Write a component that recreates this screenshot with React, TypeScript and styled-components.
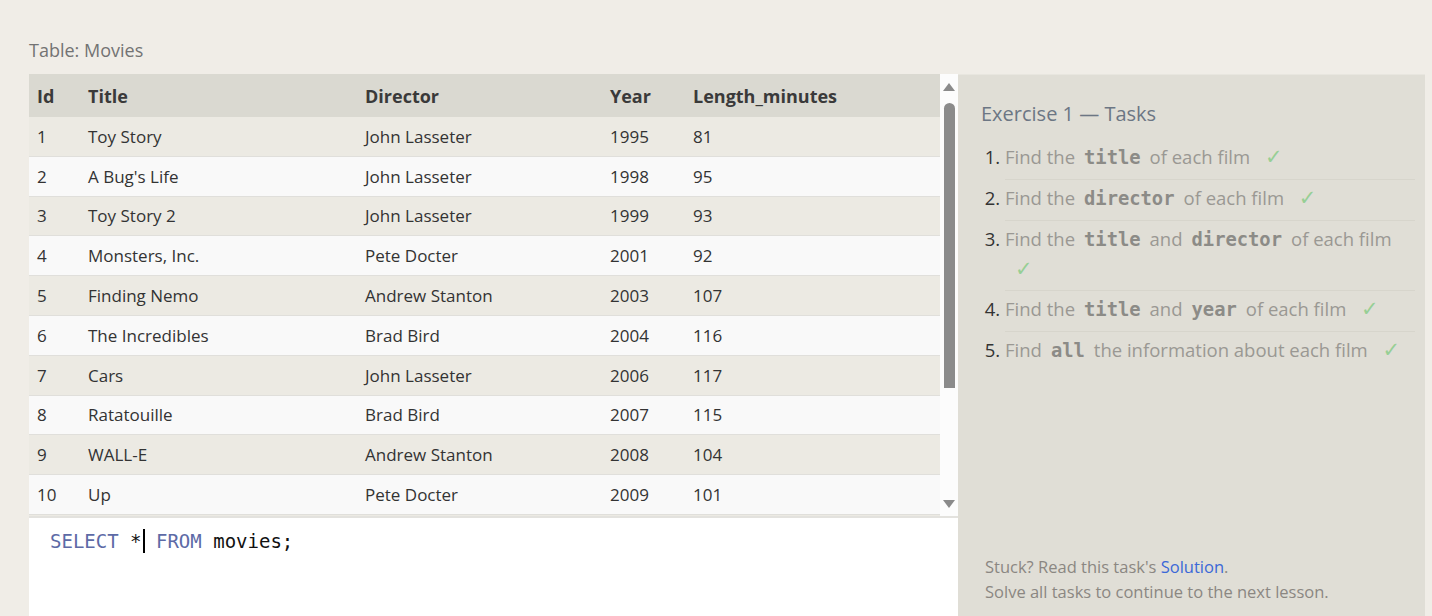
import React from "react";
import styled, { createGlobalStyle } from "styled-components";

const Global = createGlobalStyle`
  html, body { margin: 0; padding: 0; }
  body {
    background: #f0ede7;
    font-family: "Open Sans", "Noto Sans", sans-serif;
    color: #333;
  }
`;

const Page = styled.div`
  width: 1432px;
  height: 616px;
  overflow: hidden;
  padding: 36px 7px 0 29px;
  box-sizing: border-box;
`;

const Caption = styled.div`
  font-size: 18px;
  line-height: 28px;
  color: #737373;
  margin-bottom: 10px;
`;

const Main = styled.div`
  display: flex;
  height: 542px;
`;

const LeftCol = styled.div`
  width: 929px;
  display: flex;
  flex-direction: column;
`;

const TableArea = styled.div`
  display: flex;
  height: 442px;
  border-bottom: 2px solid #e3e2de;
  background: #fafafa;
`;

const TableScroll = styled.div`
  flex: 1;
  overflow: hidden;
`;

const Table = styled.table`
  width: 100%;
  border-collapse: collapse;
  table-layout: fixed;
  font-size: 17px;
`;

const Th = styled.th<{ $w?: number }>`
  ${(p) => (p.$w ? `width: ${p.$w}px;` : "")}
  text-align: left;
  font-weight: 700;
  color: #3a3a3a;
  background: #dad9d1;
  height: 43px;
  padding: 0 8px;
  box-sizing: border-box;
  font-size: 18px;
`;

const Tr = styled.tr<{ $odd: boolean }>`
  background: ${(p) => (p.$odd ? "#eceae3" : "#f9f9f9")};
  border-bottom: 1px solid #e0dfdb;
`;

const Td = styled.td`
  height: 38.8px;
  padding: 0 8px;
  color: #333;
  white-space: nowrap;
`;

const Scrollbar = styled.div`
  width: 18px;
  background: #fcfcfc;
  display: flex;
  flex-direction: column;
  align-items: center;
  padding-top: 9px;
  box-sizing: border-box;
`;

const Arrow = styled.div<{ $down?: boolean }>`
  width: 0;
  height: 0;
  border-left: 6px solid transparent;
  border-right: 6px solid transparent;
  ${(p) =>
    p.$down
      ? "border-top: 8px solid #8a8a8a;"
      : "border-bottom: 8px solid #8a8a8a;"}
`;

const Thumb = styled.div`
  width: 11px;
  height: 285px;
  margin-top: 12px;
  border-radius: 6px 6px 0 0;
  background: #8b8b8b;
`;

const Spacer = styled.div`
  flex: 1;
`;

const DownWrap = styled.div`
  padding-bottom: 8px;
`;

const Editor = styled.div`
  flex: 1;
  background: #ffffff;
  padding: 10px 21px;
  font-family: "DejaVu Sans Mono", "Liberation Mono", monospace;
  font-size: 19px;
  line-height: 26px;
  color: #111;
`;

const Kw = styled.span`
  color: #5d6aa6;
`;

const Caret = styled.span`
  display: inline-block;
  width: 2px;
  height: 24px;
  background: #000;
  vertical-align: -5px;
  margin: 0 0 0 1px;
`;

const Panel = styled.div`
  width: 467px;
  background: #e0ded6;
  border-top: 1px solid #e8e6df;
  display: flex;
  flex-direction: column;
  padding: 24px 10px 12px 23px;
  box-sizing: border-box;
`;

const PanelTitle = styled.div`
  font-size: 20px;
  line-height: 30px;
  color: #6c7684;
  margin-bottom: 10px;
`;

const TaskList = styled.ol`
  margin: 0;
  padding: 0 0 0 24px;
`;

const Task = styled.li`
  font-size: 18.5px;
  line-height: 29px;
  color: #9a9893;
  padding: 3px 0 7px 0;
  border-bottom: 1px solid #d7d5cc;
  &::marker {
    color: #333;
  }
  &:last-child {
    border-bottom: none;
  }
`;

const Code = styled.code`
  font-family: "DejaVu Sans Mono", "Liberation Mono", monospace;
  font-weight: 700;
  font-size: 18.8px;
  color: #8c8b87;
  margin: 0 9px;
`;

const Check = styled.span`
  color: #97cf95;
  font-family: "DejaVu Sans", sans-serif;
  font-size: 21px;
  line-height: 1;
  margin-left: 10px;
`;

const Footer = styled.div`
  margin-top: auto;
  padding-left: 4px;
  font-size: 16.5px;
  line-height: 25px;
  color: #8b8782;
`;

const Link = styled.a`
  color: #3b68d8;
  text-decoration: none;
`;

const movies: [number, string, string, number, number][] = [
  [1, "Toy Story", "John Lasseter", 1995, 81],
  [2, "A Bug's Life", "John Lasseter", 1998, 95],
  [3, "Toy Story 2", "John Lasseter", 1999, 93],
  [4, "Monsters, Inc.", "Pete Docter", 2001, 92],
  [5, "Finding Nemo", "Andrew Stanton", 2003, 107],
  [6, "The Incredibles", "Brad Bird", 2004, 116],
  [7, "Cars", "John Lasseter", 2006, 117],
  [8, "Ratatouille", "Brad Bird", 2007, 115],
  [9, "WALL-E", "Andrew Stanton", 2008, 104],
  [10, "Up", "Pete Docter", 2009, 101],
  [11, "Toy Story 3", "Lee Unkrich", 2010, 103],
  [12, "Cars 2", "John Lasseter", 2011, 120],
  [13, "Brave", "Brenda Chapman", 2012, 102],
  [14, "Monsters University", "Dan Scanlon", 2013, 110],
];

export default function App() {
  return (
    <>
      <Global />
      <Page>
        <Caption>Table: Movies</Caption>
        <Main>
          <LeftCol>
            <TableArea>
              <TableScroll>
                <Table>
                  <thead>
                    <tr>
                      <Th $w={51}>Id</Th>
                      <Th $w={277}>Title</Th>
                      <Th $w={245}>Director</Th>
                      <Th $w={83}>Year</Th>
                      <Th>Length_minutes</Th>
                    </tr>
                  </thead>
                  <tbody>
                    {movies.map((m, i) => (
                      <Tr key={m[0]} $odd={i % 2 === 0}>
                        <Td>{m[0]}</Td>
                        <Td>{m[1]}</Td>
                        <Td>{m[2]}</Td>
                        <Td>{m[3]}</Td>
                        <Td>{m[4]}</Td>
                      </Tr>
                    ))}
                  </tbody>
                </Table>
              </TableScroll>
              <Scrollbar>
                <Arrow />
                <Thumb />
                <Spacer />
                <DownWrap>
                  <Arrow $down />
                </DownWrap>
              </Scrollbar>
            </TableArea>
            <Editor>
              <Kw>SELECT</Kw> *<Caret /> <Kw>FROM</Kw> movies;
            </Editor>
          </LeftCol>
          <Panel>
            <PanelTitle>Exercise 1 — Tasks</PanelTitle>
            <TaskList>
              <Task>
                Find the<Code>title</Code>of each film{" "}
                <Check>✓</Check>
              </Task>
              <Task>
                Find the<Code>director</Code>of each film{" "}
                <Check>✓</Check>
              </Task>
              <Task>
                Find the<Code>title</Code>and<Code>director</Code>of each film{" "}
                <Check>✓</Check>
              </Task>
              <Task>
                Find the<Code>title</Code>and<Code>year</Code>of each film{" "}
                <Check>✓</Check>
              </Task>
              <Task>
                Find<Code>all</Code>the information about each film{" "}
                <Check>✓</Check>
              </Task>
            </TaskList>
            <Footer>
              Stuck? Read this task's <Link href="#">Solution</Link>.
              <br />
              Solve all tasks to continue to the next lesson.
            </Footer>
          </Panel>
        </Main>
      </Page>
    </>
  );
}
